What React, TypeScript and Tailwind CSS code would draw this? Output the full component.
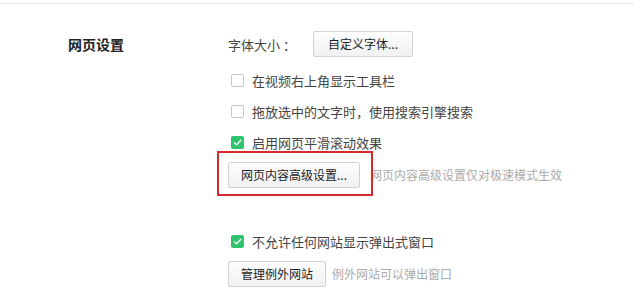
import React from 'react';

const Checkbox: React.FC<{ checked?: boolean }> = ({ checked }) =>
  checked ? (
    <span className="w-[13px] h-[13px] rounded-[2px] bg-[#2ec46d] flex items-center justify-center shrink-0">
      <svg width="9" height="9" viewBox="0 0 9 9" fill="none">
        <path d="M1.3 4.6 L3.6 6.8 L7.8 2.2" stroke="#fff" strokeWidth="1.3" strokeLinecap="round" strokeLinejoin="round" />
      </svg>
    </span>
  ) : (
    <span className="w-[13px] h-[13px] rounded-[2px] border border-[#c6c6c6] bg-white shrink-0" />
  );

const CheckRow: React.FC<{ checked?: boolean; label: string; className?: string }> = ({ checked, label, className }) => (
  <div className={`flex items-center h-5 pl-[3px] ${className ?? ''}`}>
    <Checkbox checked={checked} />
    <span className="ml-[8px] text-[13px] leading-none text-[#444] whitespace-nowrap">{label}</span>
  </div>
);

const Btn: React.FC<{ children: React.ReactNode; className?: string }> = ({ children, className }) => (
  <button
    className={`h-[26px] px-0 flex items-center justify-center whitespace-nowrap rounded-[2px] border border-[#d2d2d2] bg-gradient-to-b from-[#fdfdfd] to-[#f1f1f1] text-[12px] leading-none text-[#222] ${className ?? ''}`}
  >
    {children}
  </button>
);

export default function App() {
  return (
    <div
      className="w-[634px] h-[306px] bg-white overflow-hidden"
      style={{ fontFamily: '"Noto Sans CJK SC", "Microsoft YaHei", sans-serif' }}
    >
      <div className="mt-[3px] border-t border-[#e8e8e8]" />
      <div className="flex pt-[27px]">
        <div className="w-[228px] pl-[68px] h-[26px] flex items-center">
          <span className="text-[14px] font-bold leading-none text-[#222]">网页设置</span>
        </div>
        <div className="flex flex-col">
          <div className="flex items-center h-[26px]">
            <span className="text-[13px] leading-none text-[#444] w-[85px] whitespace-nowrap">字体大小 ：</span>
            <Btn className="w-[100px]">自定义字体...</Btn>
          </div>
          <CheckRow className="mt-[13px]" label="在视频右上角显示工具栏" />
          <CheckRow className="mt-[11px]" label="拖放选中的文字时，使用搜索引擎搜索" />
          <CheckRow checked className="mt-[11px]" label="启用网页平滑滚动效果" />
          <div className="flex items-center mt-[10px]">
            <div className="relative">
              <Btn className="w-[132px]">网页内容高级设置...</Btn>
              <div className="absolute -left-[11px] -top-[11px] -right-[13px] -bottom-[8px] border-2 border-[#d62a30] pointer-events-none" />
            </div>
            <span className="ml-[10px] text-[12px] leading-none text-[#ababab] whitespace-nowrap">网页内容高级设置仅对极速模式生效</span>
          </div>
          <CheckRow checked className="mt-[43px]" label="不允许任何网站显示弹出式窗口" />
          <div className="flex items-center mt-[10px]">
            <Btn className="w-[98px]">管理例外网站</Btn>
            <span className="ml-[6px] text-[12px] leading-none text-[#ababab] whitespace-nowrap">例外网站可以弹出窗口</span>
          </div>
        </div>
      </div>
    </div>
  );
}
